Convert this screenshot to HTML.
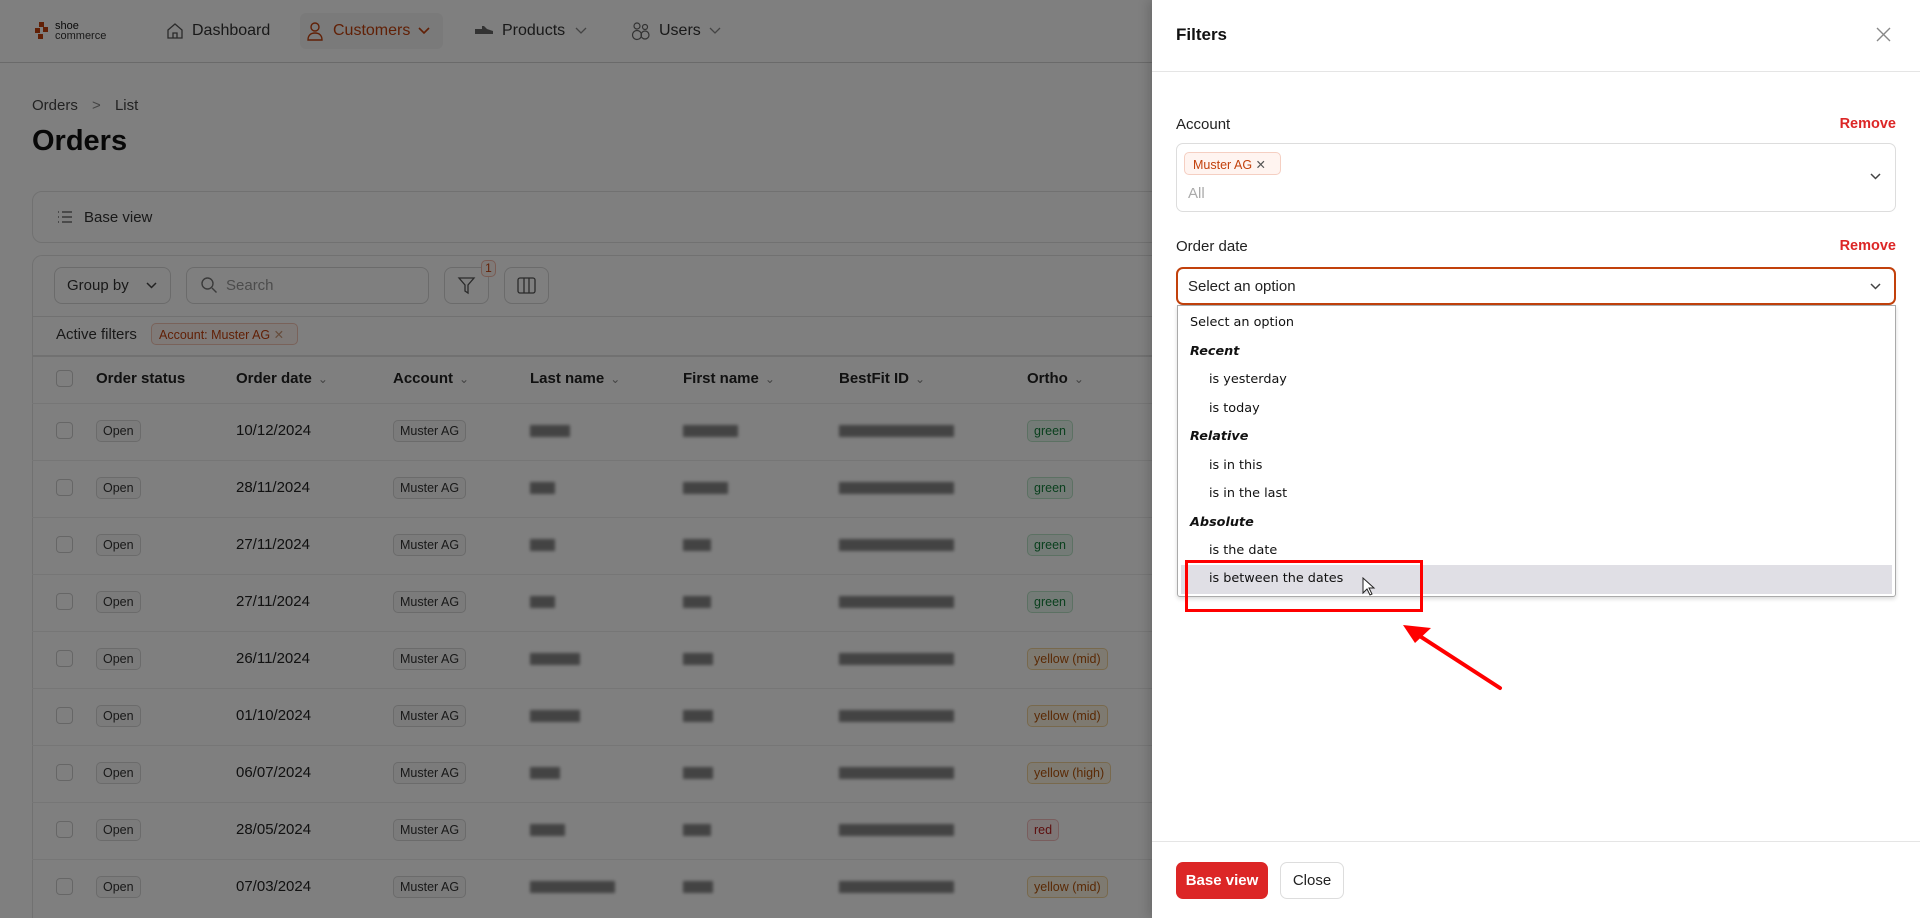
<!DOCTYPE html>
<html style="width:1920px;height:918px;overflow:hidden"><head><meta charset="utf-8">
<style>
*{box-sizing:border-box;margin:0;padding:0}
body{width:1920px;height:918px;overflow:hidden;position:relative;font-family:"Liberation Sans",sans-serif;background:#fff;color:#111}
.abs{position:absolute}
.hdr{left:0;top:0;width:1920px;height:63px;border-bottom:1px solid #d4d4d4;background:#fff}
.nav{font-size:16px;color:#333;top:22px}
.card{border:1px solid #e2e2e2;border-radius:10px;background:#fff}
.btn{border:1px solid #d6d6d6;border-radius:8px;background:#fff}
.th{top:370px;font-size:15px;color:#222;font-weight:bold}
.th .c{font-weight:normal;color:#888;font-size:12px;margin-left:6px}
.bd{font-size:12.5px;border:1px solid #d6d6d6;border-radius:5px;padding:3px 6px;color:#333;background:#f7f7f7}
.cell{font-size:15px;color:#222}
.blur{background:#555;filter:blur(1.5px);height:12px;opacity:.7}
.rowline{left:32px;width:1130px;height:1px;background:#ececec}
.ov{left:0;top:0;width:1152px;height:918px;background:rgba(0,0,0,.5)}
.panel{left:1152px;top:0;width:768px;height:918px;background:#fff;box-shadow:-4px 0 10px rgba(0,0,0,.15)}
.lbl{font-size:15px;color:#222}
.rm{font-size:14.5px;color:#dc2626;font-weight:bold;right:24px}
.opt{position:absolute;left:0;width:100%;height:28.5px;line-height:28.5px;font-size:12.8px;color:#111;font-family:"DejaVu Sans","Liberation Sans",sans-serif}
.grp{font-weight:bold;font-style:italic;padding-left:9px}
.it{padding-left:28px}
</style></head><body>

<div class="abs hdr"></div>
<svg class="abs" style="left:34px;top:21px" width="14" height="20" viewBox="0 0 14 20"><g fill="#c2410c"><rect x="5" y="1" width="5" height="5"/><rect x="9" y="6" width="5" height="5"/><rect x="1" y="7" width="5" height="5"/><rect x="4" y="13" width="5" height="5"/></g></svg>
<div class="abs" style="left:55px;top:21px;font-size:11px;line-height:10px;color:#111">shoe<br><span style="color:#333">commerce</span></div>

<svg class="abs" style="left:165px;top:21px" width="20" height="20" viewBox="0 0 20 20" fill="none" stroke="#555" stroke-width="1.3"><path d="M3 9L10 3l7 6v8H3z M8 17v-5h4v5"/></svg>
<div class="abs nav" style="left:192px">Dashboard</div>
<div class="abs" style="left:300px;top:13px;width:143px;height:36px;background:#f4f4f4;border-radius:6px"></div>
<svg class="abs" style="left:306px;top:21px" width="18" height="20" viewBox="0 0 18 20" fill="none" stroke="#c2410c" stroke-width="1.4"><circle cx="9" cy="6" r="4"/><path d="M2 19c0-5 3-7 7-7s7 2 7 7z"/></svg>
<div class="abs nav" style="left:333px;color:#c2410c">Customers</div>
<svg class="abs" style="left:418px;top:27px" width="12" height="8" viewBox="0 0 12 8" fill="none" stroke="#c2410c" stroke-width="1.6"><path d="M1 1l5 5 5-5"/></svg>
<svg class="abs" style="left:474px;top:25px" width="20" height="10" viewBox="0 0 20 10"><path d="M1 9h18V6l-6-2-3-3H8v3H1z" fill="#666"/></svg>
<div class="abs nav" style="left:502px">Products</div>
<svg class="abs" style="left:575px;top:27px" width="12" height="8" viewBox="0 0 12 8" fill="none" stroke="#888" stroke-width="1.3"><path d="M1 1l5 5 5-5"/></svg>
<svg class="abs" style="left:631px;top:21px" width="20" height="20" viewBox="0 0 20 20" fill="none" stroke="#666" stroke-width="1.2"><circle cx="6" cy="5" r="3"/><circle cx="14" cy="6" r="2.5"/><circle cx="6" cy="14" r="4.5"/><circle cx="14" cy="14" r="4"/></svg>
<div class="abs nav" style="left:659px">Users</div>
<svg class="abs" style="left:709px;top:27px" width="12" height="8" viewBox="0 0 12 8" fill="none" stroke="#888" stroke-width="1.3"><path d="M1 1l5 5 5-5"/></svg>

<div class="abs" style="left:32px;top:97px;font-size:15px;color:#444">Orders <span style="margin:0 10px;color:#888">&gt;</span> List</div>
<div class="abs" style="left:32px;top:125px;font-size:29px;font-weight:bold;color:#111">Orders</div>

<div class="abs card" style="left:32px;top:191px;width:1860px;height:52px"></div>
<svg class="abs" style="left:57px;top:210px" width="16" height="14" viewBox="0 0 16 14" stroke="#555" stroke-width="1.3"><path d="M1 2h1M5 2h10M1 7h1M5 7h10M1 12h1M5 12h10"/></svg>
<div class="abs" style="left:84px;top:209px;font-size:15px;color:#333">Base view</div>

<div class="abs card" style="left:32px;top:255px;width:1860px;height:663px;border-bottom:none;border-radius:10px 10px 0 0"></div>
<div class="abs btn" style="left:54px;top:267px;width:117px;height:37px"></div>
<div class="abs" style="left:67px;top:277px;font-size:15px;color:#333">Group by</div>
<svg class="abs" style="left:146px;top:282px" width="11" height="7" viewBox="0 0 11 7" fill="none" stroke="#444" stroke-width="1.5"><path d="M1 1l4.5 4.5L10 1"/></svg>
<div class="abs btn" style="left:186px;top:267px;width:243px;height:37px"></div>
<svg class="abs" style="left:200px;top:276px" width="18" height="18" viewBox="0 0 18 18" fill="none" stroke="#777" stroke-width="1.4"><circle cx="7.5" cy="7.5" r="5.5"/><path d="M12 12l4.5 4.5"/></svg>
<div class="abs" style="left:226px;top:277px;font-size:15px;color:#999">Search</div>
<div class="abs btn" style="left:444px;top:267px;width:45px;height:37px"></div>
<svg class="abs" style="left:457px;top:276px" width="19" height="19" viewBox="0 0 19 19" fill="none" stroke="#555" stroke-width="1.3"><path d="M2 2h15l-6 7v8l-3-2V9z"/></svg>
<div class="abs" style="left:481px;top:260px;width:15px;height:17px;border:1px solid #f2b9a8;border-radius:5px;background:#fff4f0;color:#c2410c;font-size:12px;text-align:center;line-height:15px">1</div>
<div class="abs btn" style="left:504px;top:267px;width:45px;height:37px"></div>
<svg class="abs" style="left:517px;top:277px" width="19" height="17" viewBox="0 0 19 17" fill="none" stroke="#555" stroke-width="1.3"><rect x="1" y="1" width="17" height="15" rx="2"/><path d="M7 1v15M12 1v15"/></svg>
<div class="abs" style="left:33px;top:316px;width:1858px;height:1px;background:#e2e2e2"></div>
<div class="abs" style="left:56px;top:326px;font-size:15px;color:#333">Active filters</div>
<div class="abs" style="left:151px;top:323px;width:147px;height:22px;border:1px solid #f2c4b4;border-radius:5px;background:#fff4f0;font-size:12.5px;color:#c2410c;padding:3px 7px">Account: Muster AG <span style="color:#c97">✕</span></div>
<div class="abs" style="left:33px;top:355px;width:1858px;height:2px;background:#e2e2e2"></div>

<div class="abs" style="left:56px;top:370px;width:17px;height:17px;border:1px solid #ccc;border-radius:4px;background:#fff"></div>
<div class="abs th" style="left:96px">Order status</div>
<div class="abs th" style="left:236px">Order date<span class="c">⌄</span></div>
<div class="abs th" style="left:393px">Account<span class="c">⌄</span></div>
<div class="abs th" style="left:530px">Last name<span class="c">⌄</span></div>
<div class="abs th" style="left:683px">First name<span class="c">⌄</span></div>
<div class="abs th" style="left:839px">BestFit ID<span class="c">⌄</span></div>
<div class="abs th" style="left:1027px">Ortho<span class="c">⌄</span></div>
<div class="abs rowline" style="top:403px"></div>

<div id="rows"></div>
<script>
var data=[["10/12/2024",40,55,"green"],["28/11/2024",25,45,"green"],["27/11/2024",25,28,"green"],["27/11/2024",25,28,"green"],["26/11/2024",50,30,"yellow (mid)"],["01/10/2024",50,30,"yellow (mid)"],["06/07/2024",30,30,"yellow (high)"],["28/05/2024",35,28,"red"],["07/03/2024",85,30,"yellow (mid)"]];
var h="";
data.forEach(function(d,i){var c=403+i*57+28;var t=c-11;
var col={"green":["#15803d","#e9f7ee","#b8e2c6"],"red":["#b91c1c","#fdecec","#f3bdbd"]}[d[3]]||["#b45309","#fdf4e3","#f0d39a"];
h+='<div class="abs" style="left:56px;top:'+(c-9)+'px;width:17px;height:17px;border:1px solid #ccc;border-radius:4px;background:#fff"></div>';
h+='<div class="abs bd" style="left:96px;top:'+t+'px">Open</div>';
h+='<div class="abs cell" style="left:236px;top:'+(c-9)+'px">'+d[0]+'</div>';
h+='<div class="abs bd" style="left:393px;top:'+t+'px">Muster AG</div>';
h+='<div class="abs blur" style="left:530px;top:'+(c-6)+'px;width:'+d[1]+'px"></div>';
h+='<div class="abs blur" style="left:683px;top:'+(c-6)+'px;width:'+d[2]+'px"></div>';
h+='<div class="abs blur" style="left:839px;top:'+(c-6)+'px;width:115px"></div>';
h+='<div class="abs bd" style="left:1027px;top:'+t+'px;color:'+col[0]+';background:'+col[1]+';border-color:'+col[2]+'">'+d[3]+'</div>';
if(i<8)h+='<div class="abs rowline" style="top:'+(403+(i+1)*57)+'px"></div>';});
document.getElementById("rows").innerHTML=h;
</script>

<div class="abs ov"></div>

<div class="abs panel"></div>
<div class="abs" style="left:1176px;top:25px;font-size:17px;font-weight:bold;color:#111">Filters</div>
<svg class="abs" style="left:1876px;top:27px" width="15" height="15" viewBox="0 0 15 15" stroke="#888" stroke-width="1.4"><path d="M1 1l13 13M14 1L1 14"/></svg>
<div class="abs" style="left:1152px;top:71px;width:768px;height:1px;background:#e5e5e5"></div>

<div class="abs lbl" style="left:1176px;top:116px">Account</div>
<div class="abs rm" style="top:116px">Remove</div>
<div class="abs" style="left:1176px;top:143px;width:720px;height:69px;border:1px solid #ddd;border-radius:7px;background:#fff"></div>
<div class="abs" style="left:1184px;top:152px;width:97px;height:23px;border:1px solid #f5cfc2;border-radius:5px;background:#fff4f0;font-size:12.5px;color:#c2410c;padding:4px 8px">Muster AG <span style="color:#555">✕</span></div>
<div class="abs" style="left:1188px;top:185px;font-size:15px;color:#aaa">All</div>
<svg class="abs" style="left:1870px;top:173px" width="11" height="7" viewBox="0 0 11 7" fill="none" stroke="#444" stroke-width="1.5"><path d="M1 1l4.5 4.5L10 1"/></svg>

<div class="abs lbl" style="left:1176px;top:238px">Order date</div>
<div class="abs rm" style="top:238px">Remove</div>
<div class="abs" style="left:1176px;top:267px;width:720px;height:38px;border:2px solid #c2410c;border-radius:7px;background:#fff"></div>
<div class="abs" style="left:1188px;top:278px;font-size:15px;color:#222">Select an option</div>
<svg class="abs" style="left:1870px;top:283px" width="11" height="7" viewBox="0 0 11 7" fill="none" stroke="#444" stroke-width="1.5"><path d="M1 1l4.5 4.5L10 1"/></svg>

<div class="abs" style="left:1177px;top:305px;width:719px;height:292px;border:1px solid #aaa;border-radius:0 0 3px 3px;background:#fff;box-shadow:0 2px 4px rgba(0,0,0,.15)">
 <div style="position:absolute;left:3px;top:3px;right:3px;bottom:3px">
  <div class="opt" style="top:0;padding-left:9px">Select an option</div>
  <div class="opt grp" style="top:28.5px">Recent</div>
  <div class="opt it" style="top:57px">is yesterday</div>
  <div class="opt it" style="top:85.5px">is today</div>
  <div class="opt grp" style="top:114px">Relative</div>
  <div class="opt it" style="top:142.5px">is in this</div>
  <div class="opt it" style="top:171px">is in the last</div>
  <div class="opt grp" style="top:199.5px">Absolute</div>
  <div class="opt it" style="top:228px">is the date</div>
  <div class="opt it" style="top:256px;background:#e0dfe5">is between the dates</div>
 </div>
</div>
<svg class="abs" style="left:1362px;top:577px" width="14" height="20" viewBox="0 0 14 20"><path d="M1 1v15l4-4 3 6 2-1-3-6h5z" fill="#fff" stroke="#222" stroke-width="1"/></svg>

<div class="abs" style="left:1185px;top:560px;width:238px;height:52px;border:3px solid #ff0000"></div>
<svg class="abs" style="left:1395px;top:615px" width="115" height="80" viewBox="0 0 115 80"><path d="M105 73L20 18" stroke="#f00" stroke-width="4" stroke-linecap="round"/><path d="M8 10l28 3-16 15z" fill="#f00"/></svg>

<div class="abs" style="left:1152px;top:841px;width:768px;height:1px;background:#e5e5e5"></div>
<div class="abs" style="left:1176px;top:862px;width:92px;height:37px;background:#dc2626;border-radius:7px;color:#fff;font-weight:bold;font-size:15px;text-align:center;line-height:37px">Base view</div>
<div class="abs" style="left:1280px;top:862px;width:64px;height:37px;border:1px solid #ddd;border-radius:7px;color:#222;font-size:15px;text-align:center;line-height:35px">Close</div>
</body></html>
